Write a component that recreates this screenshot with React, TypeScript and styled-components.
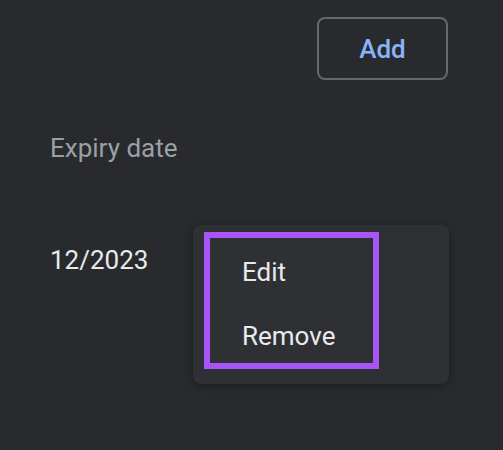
import React from "react";
import styled, { createGlobalStyle } from "styled-components";

const GlobalStyle = createGlobalStyle`
  html, body {
    margin: 0;
    padding: 0;
    background: #292a2d;
    height: 100%;
  }
  body {
    font-family: Roboto, "Liberation Sans", Arial, sans-serif;
  }
`;

const menuItems = ["Edit", "Remove"];

const App = () => {
  return (
    <>
      <GlobalStyle />
      <Page>
        <Toolbar>
          <AddButton>Add</AddButton>
        </Toolbar>
        <Label>Expiry date</Label>
        <Row>
          <Value>12/2023</Value>
          <Menu>
            <Highlight>
              {menuItems.map((item) => (
                <MenuItem key={item}>{item}</MenuItem>
              ))}
            </Highlight>
          </Menu>
        </Row>
      </Page>
    </>
  );
};

const Page = styled.div`
  width: 503px;
  height: 450px;
  box-sizing: border-box;
  padding: 17px 55px 0 50px;
  background: #292a2d;
  overflow: hidden;
`;
const Toolbar = styled.div`
  display: flex;
  justify-content: flex-end;
`;
const AddButton = styled.button`
  width: 131px;
  height: 63px;
  box-sizing: border-box;
  border: 2px solid #65676b;
  border-radius: 8px;
  background: transparent;
  color: #8ab4f8;
  font-family: Roboto, "Liberation Sans", Arial, sans-serif;
  font-size: 26px;
  font-weight: 500;
  padding: 0;
  cursor: pointer;
`;
const Label = styled.div`
  margin-top: 53px;
  font-size: 26px;
  line-height: 30px;
  color: #9aa0a6;
`;
const Row = styled.div`
  position: relative;
  margin-top: 82px;
`;
const Value = styled.div`
  font-size: 26px;
  line-height: 30px;
  color: #e8eaed;
`;
const Menu = styled.div`
  position: absolute;
  left: 143px;
  top: -20px;
  width: 256px;
  height: 159px;
  box-sizing: border-box;
  padding: 7px 0 0 11px;
  background: #2f3034;
  border-radius: 8px;
  box-shadow: 0 2px 8px rgba(0, 0, 0, 0.35);
`;
const Highlight = styled.div`
  width: 175px;
  height: 137px;
  box-sizing: border-box;
  border: 6px solid #a855f7;
  padding-top: 2px;
`;
const MenuItem = styled.div`
  height: 64px;
  display: flex;
  align-items: center;
  padding-left: 32px;
  font-size: 26px;
  color: #e8eaed;
`;

export default App;
